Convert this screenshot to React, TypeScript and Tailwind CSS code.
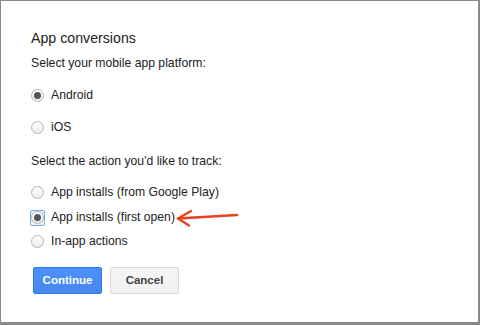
import React from 'react';

const Radio: React.FC<{ checked?: boolean; focused?: boolean }> = ({ checked, focused }) => (
  <span
    className={`flex items-center justify-center w-[15px] h-[16px] ${
      focused ? 'border border-[#7aa7ee] rounded-[2px] bg-[#edf3fd]' : ''
    }`}
  >
    <span className="flex items-center justify-center w-[13px] h-[13px] rounded-full border border-[#b4b4b4] bg-gradient-to-b from-[#fdfdfd] to-[#ececec]">
      {checked && <span className="w-[7px] h-[7px] rounded-full bg-[#555]" />}
    </span>
  </span>
);

const Option: React.FC<{ label: string; checked?: boolean; focused?: boolean; arrow?: boolean; className?: string }> = ({
  label,
  checked,
  focused,
  arrow,
  className,
}) => (
  <div className={`flex items-center h-[17px] -ml-[1px] ${className ?? ''}`}>
    <Radio checked={checked} focused={focused} />
    <span className="ml-[6px] text-[12.2px] text-[#222]">{label}</span>
    {arrow && (
      <svg width="64" height="20" viewBox="0 0 64 20" className="ml-[1px] mt-[1px]">
        <path d="M2 10.5 L61 7" stroke="#e9411f" strokeWidth="2.4" strokeLinecap="round" fill="none" />
        <path d="M15 3 L2 10.5 L13 17.5" stroke="#e9411f" strokeWidth="2.4" strokeLinecap="round" strokeLinejoin="round" fill="none" />
      </svg>
    )}
  </div>
);

export default function App() {
  return (
    <div
      className="w-[480px] h-[325px] bg-white border-t border-l border-r-2 border-b-[3px] border-[#8a8a8a] overflow-hidden"
      style={{ fontFamily: '"Liberation Sans", Arial, sans-serif' }}
    >
      <div className="pl-[30px] pt-[27px]">
        <h1 className="text-[14.2px] leading-[20px] text-[#222]">App conversions</h1>
        <p className="mt-[7px] text-[12.2px] leading-[16px] text-[#222]">Select your mobile app platform:</p>
        <Option label="Android" checked className="mt-[16px]" />
        <Option label="iOS" className="mt-[15px]" />
        <p className="mt-[17px] text-[12.2px] leading-[16px] text-[#222]">Select the action you'd like to track:</p>
        <Option label="App installs (from Google Play)" className="mt-[15px]" />
        <Option label="App installs (first open)" checked focused arrow className="mt-[8px]" />
        <Option label="In-app actions" className="mt-[7px]" />
        <div className="flex gap-[8px] mt-[17px] ml-[2px]">
          <button className="w-[69px] h-[27px] rounded-[2px] border border-[#3079ed] bg-gradient-to-b from-[#4d90fe] to-[#4787ed] text-white text-[11.5px] font-bold">
            Continue
          </button>
          <button className="w-[69px] h-[27px] rounded-[2px] border border-[#d9d9d9] bg-gradient-to-b from-[#f5f5f5] to-[#f1f1f1] text-[#444] text-[11.5px] font-bold">
            Cancel
          </button>
        </div>
      </div>
    </div>
  );
}
